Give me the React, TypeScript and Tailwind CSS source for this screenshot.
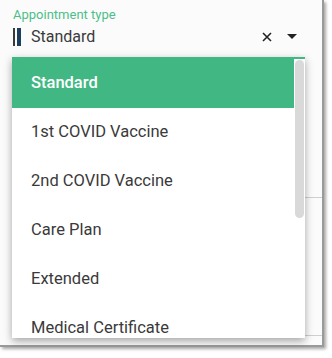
import React from "react";

const items = [
  "Standard",
  "1st COVID Vaccine",
  "2nd COVID Vaccine",
  "Care Plan",
  "Extended",
  "Medical Certificate",
];

export default function App() {
  return (
    <div
      className="w-[332px] h-[358px] bg-white overflow-hidden"
      style={{ fontFamily: "Roboto, 'Noto Sans', sans-serif" }}
    >
      <div className="relative w-[324px] h-[347px] bg-[#fbfbfb] border-r-2 border-b-2 border-[#9a9a9a] shadow-[2px_2px_3px_rgba(0,0,0,0.35)]">
        {/* field */}
        <div className="pt-[7px] pl-[13px] pr-[25px]">
          <div className="text-[13px] leading-[15px] text-[#4cbf8a]">Appointment type</div>
          <div className="mt-[5px] flex items-center h-[20px]">
            <div className="w-[2px] h-[18px] bg-[#3a3a3a]" />
            <div className="ml-[2px] w-[4px] h-[18px] bg-[#1d3f5e]" />
            <div className="ml-[10px] text-[16px] text-[#3a3a3a] flex-1">Standard</div>
            <svg width="10" height="10" viewBox="0 0 10 10" className="mr-[15px]">
              <path d="M1 1 L9 9 M9 1 L1 9" stroke="#222" strokeWidth="1.6" />
            </svg>
            <svg width="10" height="6" viewBox="0 0 10 6">
              <path d="M0 0 L10 0 L5 5 Z" fill="#222" />
            </svg>
          </div>
        </div>
        {/* underlying form lines */}
        <div className="absolute left-[292px] top-[197px] w-[30px] h-[1px] bg-[#cfcfcf]" />
        <div className="absolute left-[292px] top-[335px] w-[30px] h-[1px] bg-[#cfcfcf]" />
        {/* dropdown */}
        <div className="absolute left-[12px] top-[57px] w-[293px] h-[281px] bg-white border-t-2 border-[#41b883] shadow-[0_3px_8px_rgba(0,0,0,0.35)] flex overflow-hidden">
          <div className="flex-1">
            {items.map((it, i) => (
              <div
                key={it}
                className={
                  "h-[49px] flex items-center pl-[19px] text-[16.5px] " +
                  (i === 0 ? "bg-[#41b883] text-white font-medium" : "text-[#3a3a3a]")
                }
              >
                {it}
              </div>
            ))}
          </div>
          <div className="w-[11px] pt-[1px] pl-[1px]">
            <div className="w-[9px] h-[158px] rounded-[5px] bg-[#d9d9d9]" />
          </div>
        </div>
      </div>
    </div>
  );
}
